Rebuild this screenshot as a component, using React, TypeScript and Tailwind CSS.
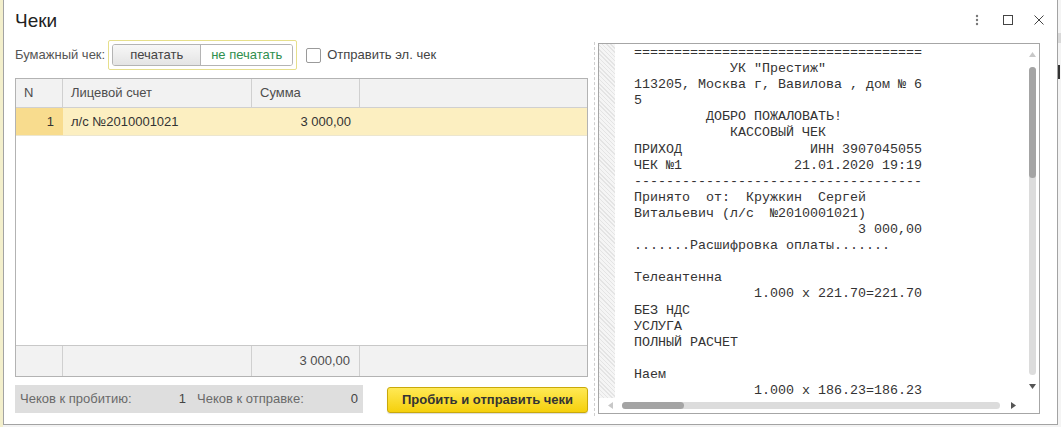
import React from "react";

const receipt = [
  "====================================",
  "            УК \"Престиж\"",
  "113205, Москва г, Вавилова , дом № 6",
  "5",
  "         ДОБРО ПОЖАЛОВАТЬ!",
  "            КАССОВЫЙ ЧЕК",
  "ПРИХОД                ИНН 3907045055",
  "ЧЕК №1              21.01.2020 19:19",
  "------------------------------------",
  "Принято  от:  Кружкин  Сергей",
  "Витальевич (л/с  №2010001021)",
  "                            3 000,00",
  ".......Расшифровка оплаты.......",
  "",
  "Телеантенна",
  "               1.000 x 221.70=221.70",
  "БЕЗ НДС",
  "УСЛУГА",
  "ПОЛНЫЙ РАСЧЕТ",
  "",
  "Наем",
  "               1.000 x 186.23=186.23",
];

export default function App() {
  return (
    <div className="w-[1061px] h-[427px] flex bg-[#f3f3f3] overflow-hidden font-['Liberation_Sans',Arial,sans-serif]">
      <div className="w-[3px] h-full bg-[#f3efcc] shrink-0" />
      <div className="w-[1055px] h-[425px] shrink-0 bg-white border-l border-r border-b border-[#a3a3a3] flex flex-col">
        {/* Title bar */}
        <div className="h-[40px] flex items-center pl-[11px] pr-[13px] shrink-0">
          <div className="text-[19px] text-[#222] leading-none">Чеки</div>
          <div className="ml-auto flex items-center">
            <svg width="4" height="12" viewBox="0 0 4 12" className="mr-[24px]">
              <circle cx="2" cy="2" r="1.2" fill="#777" />
              <circle cx="2" cy="6" r="1.2" fill="#777" />
              <circle cx="2" cy="10" r="1.2" fill="#777" />
            </svg>
            <svg width="10" height="10" viewBox="0 0 10 10" className="mr-[21px]">
              <rect x="0.5" y="0.5" width="9" height="9" fill="none" stroke="#444" strokeWidth="1" />
            </svg>
            <svg width="10" height="10" viewBox="0 0 10 10">
              <path d="M0.5 0.5 L9.5 9.5 M9.5 0.5 L0.5 9.5" stroke="#444" strokeWidth="1" />
            </svg>
          </div>
        </div>
        {/* Body */}
        <div className="flex flex-row pl-[11px]">
          {/* Left column */}
          <div className="w-[573px] flex flex-col shrink-0">
            <div className="h-[30px] flex items-center text-[13px]">
              <span className="text-[#555]">Бумажный чек:</span>
              <div className="ml-[3px] h-[30px] w-[189px] border border-[#e6df8c] rounded-[2px] p-[3px]">
                <div className="h-full flex border border-[#b4b4b4] rounded-[3px] overflow-hidden">
                  <div className="w-[88px] flex items-center justify-center bg-[linear-gradient(#f7f7f7,#e4e4e4)] border-r border-[#b4b4b4] text-[#444]">
                    печатать
                  </div>
                  <div className="flex-1 flex items-center justify-center bg-white text-[#2f8f4e]">
                    не печатать
                  </div>
                </div>
              </div>
              <div className="ml-[9px] w-[15px] h-[15px] border border-[#9a9a9a] rounded-[2px] bg-white" />
              <span className="ml-[6px] text-[#444]">Отправить эл. чек</span>
            </div>
            {/* Table */}
            <div className="mt-[8px] h-[299px] border border-[#b3b3b3] flex flex-col text-[13px]">
              <div className="h-[29px] flex bg-[#f2f2f2] border-b border-[#d0d0d0] text-[#4d4d4d] shrink-0">
                <div className="w-[47px] border-r border-[#d0d0d0] flex items-center pl-[8px]">N</div>
                <div className="w-[189px] border-r border-[#d0d0d0] flex items-center pl-[8px]">Лицевой счет</div>
                <div className="w-[108px] border-r border-[#d0d0d0] flex items-center pl-[8px]">Сумма</div>
                <div className="flex-1" />
              </div>
              <div className="h-[28px] flex border-b border-[#ece6cf] text-[#333] shrink-0">
                <div className="w-[47px] bg-[#f8dc8e] flex items-center justify-end pr-[9px]">1</div>
                <div className="w-[189px] bg-[#fcefc1] flex items-center pl-[8px]">л/с №2010001021</div>
                <div className="w-[108px] bg-[#fcefc1] flex items-center justify-end pr-[9px]">3 000,00</div>
                <div className="flex-1 bg-[#fcefc1]" />
              </div>
              <div className="flex-1 bg-white" />
              <div className="h-[31px] flex bg-[#f2f2f2] border-t border-[#c8c8c8] text-[#4d4d4d] shrink-0">
                <div className="w-[47px] border-r border-[#d0d0d0]" />
                <div className="w-[189px] border-r border-[#d0d0d0]" />
                <div className="w-[108px] border-r border-[#d0d0d0] flex items-center justify-end pr-[9px]">3 000,00</div>
                <div className="flex-1" />
              </div>
            </div>
            {/* Bottom */}
            <div className="mt-[8px] h-[28px] flex items-center">
              <div className="w-[348px] h-[28px] bg-[#dedede] flex items-center text-[13px] text-[#6a6a6a] pl-[5px]">
                <div className="w-[166px] flex justify-between">
                  <span>Чеков к пробитию:</span>
                  <span className="text-[#444]">1</span>
                </div>
                <div className="ml-[11px] w-[161px] flex justify-between">
                  <span>Чеков к отправке:</span>
                  <span className="text-[#444]">0</span>
                </div>
              </div>
              <div className="ml-auto mt-[2px] w-[201px] h-[26px] rounded-[3px] border border-[#c9a90a] bg-[linear-gradient(#ffe955,#f5d00c)] flex items-center justify-center text-[13px] font-bold text-[#333] shadow-[0_1px_1px_rgba(0,0,0,0.15)]">
                Пробить и отправить чеки
              </div>
            </div>
          </div>
          {/* Right panel */}
          <div className="ml-[6px] mt-[2px] h-[374px] border-l border-dashed border-[#cfcfcf] pl-[3px]">
            <div className="mt-[1px] w-[442px] h-[371px] border border-[#a6a6a6] flex flex-col bg-white">
              <div className="flex-1 flex min-h-0">
                <div className="w-[16px] shrink-0 bg-[repeating-linear-gradient(45deg,#e4e4e4_0px,#e4e4e4_1px,#f5f5f5_1px,#f5f5f5_3px)]" />
                <div className="flex-1 overflow-hidden">
                  <div className="pl-[19px] pt-[1px] font-['Liberation_Mono','Courier_New',monospace] text-[13.33px] leading-[16.1px] text-[#333] whitespace-pre">
                    {receipt.map((l, i) => (
                      <div key={i}>{l || " "}</div>
                    ))}
                  </div>
                </div>
                <div className="w-[14px] shrink-0 flex flex-col items-center">
                  <svg width="7" height="5" viewBox="0 0 7 5" className="mt-[8px]">
                    <path d="M3.5 0 L7 5 L0 5 Z" fill="#c8c8c8" />
                  </svg>
                  <div className="mt-[10px] w-[7px] h-[308px] rounded-full bg-[#dcdcdc] flex flex-col">
                    <div className="h-[111px] rounded-full bg-[#a4a4a4]" />
                  </div>
                  <svg width="7" height="5" viewBox="0 0 7 5" className="mt-[9px]">
                    <path d="M0 0 L7 0 L3.5 5 Z" fill="#555" />
                  </svg>
                </div>
              </div>
              <div className="h-[15px] shrink-0 flex items-center">
                <svg width="5" height="7" viewBox="0 0 5 7" className="ml-[9px]">
                  <path d="M5 0 L5 7 L0 3.5 Z" fill="#c8c8c8" />
                </svg>
                <div className="ml-[9px] w-[378px] h-[7px] rounded-full bg-[#dcdcdc] flex">
                  <div className="w-[62px] rounded-full bg-[#a4a4a4]" />
                </div>
                <svg width="5" height="7" viewBox="0 0 5 7" className="ml-[11px]">
                  <path d="M0 0 L5 3.5 L0 7 Z" fill="#555" />
                </svg>
              </div>
            </div>
          </div>
        </div>
      </div>
      <div className="flex-1 h-full bg-[#f4f4f4] flex flex-col">
        <div className="mt-[33px] h-[10px] w-full bg-[#d9d9d9]" />
        <div className="mt-[22px] h-[14px] w-[2px] bg-[#333]" />
      </div>
    </div>
  );
}
